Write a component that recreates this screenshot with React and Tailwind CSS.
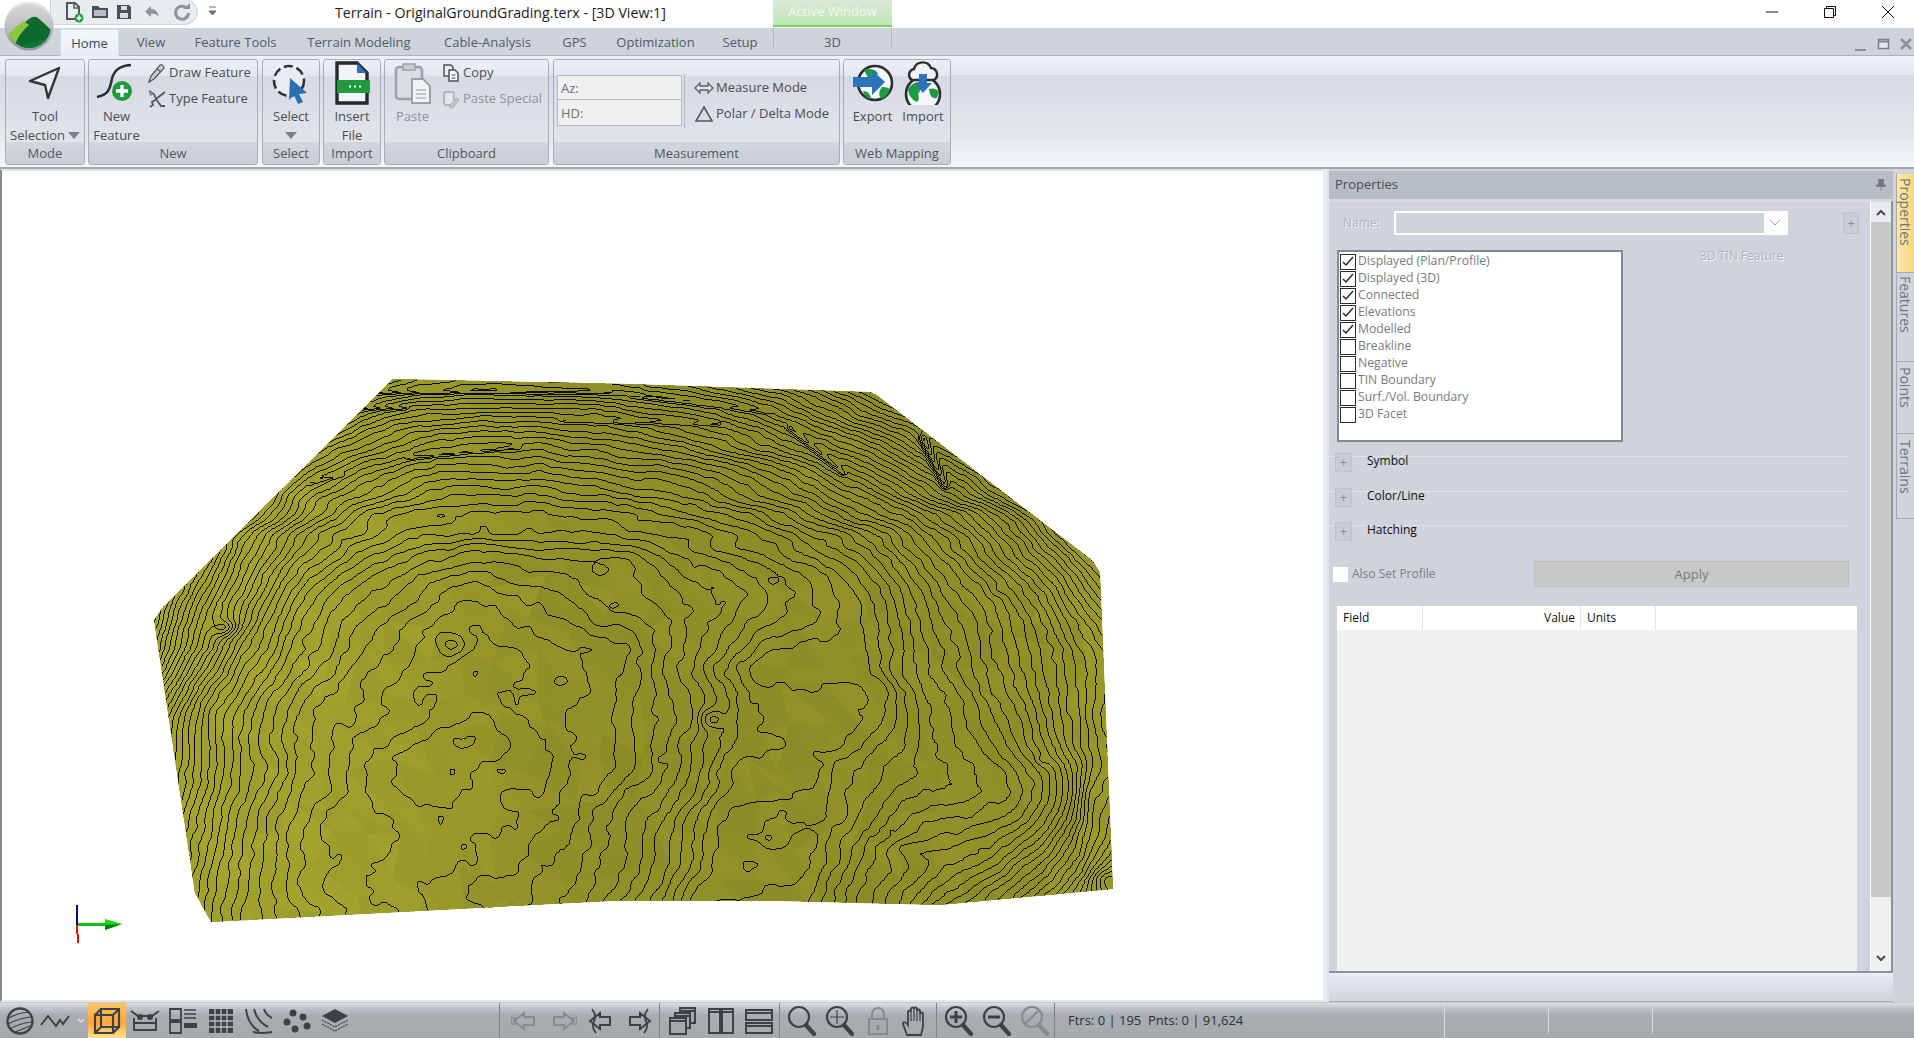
import React, { useMemo } from "react";

const outline = [
  [393, 379], [630, 384], [870, 392], [878, 396], [1093, 561], [1100, 573],
  [1113, 889], [940, 905], [781, 901], [610, 901], [211, 922], [195, 893],
  [154, 620], [163, 607],
];

const bumps = [
  [225, 628, 3, 11, 8], [452, 645, 2.2, 13, 11], [710, 719, 2.4, 12, 9], [1030, 810, -7, 85, 62],
  [1105, 880, 3, 16, 12], [1090, 800, 2, 14, 30], [470, 735, -0.8, 40, 22], [350, 720, 0.9, 10, 10],
  [770, 580, 0.9, 9, 7], [600, 570, 0.8, 7, 5], [1000, 590, 0.8, 8, 6], [905, 850, 1.4, 30, 12],
  [880, 690, -1.2, 16, 16], [510, 800, 1, 9, 7], [330, 690, 0.8, 7, 5], [560, 680, 0.8, 8, 6],
  [430, 700, 0.8, 6, 6], [500, 770, 0.8, 8, 5], [300, 650, 0.7, 5, 4], [660, 760, 0.8, 6, 5],
  [960, 740, 0.8, 6, 6], [1040, 760, 0.8, 7, 5], [640, 660, 0.8, 6, 5], [890, 830, 0.7, 5, 4],
];

const ridges = [
  [373, 392, 610, 392, 1.5, 1.6], [350, 408, 407, 408, 1.5, 1.6], [407, 458, 520, 447, 1.6, 1.6],
  [310, 483, 343, 475, 1.2, 1.6], [630, 396, 770, 412, 1.2, 1.6], [790, 428, 843, 473, 2, 3],
  [923, 439, 945, 485, 3.5, 4], [560, 420, 720, 424, 1.2, 1.6],
];

const rand = (x, y) => {
  const s = Math.sin(x * 127.1 + y * 311.7) * 43758.5453;
  return s - Math.floor(s);
};

const vnoise = (x, y) => {
  const ix = Math.floor(x);
  const iy = Math.floor(y);
  const fx = x - ix;
  const fy = y - iy;
  const u = fx * fx * (3 - 2 * fx);
  const v = fy * fy * (3 - 2 * fy);
  const a = rand(ix, iy);
  const b = rand(ix + 1, iy);
  const c = rand(ix, iy + 1);
  const d = rand(ix + 1, iy + 1);
  return (a + (b - a) * u + (c - a) * v + (a - b - c + d) * u * v) * 2 - 1;
};

const smooth = (a, b, x) => {
  const t = Math.min(1, Math.max(0, (x - a) / (b - a)));
  return t * t * (3 - 2 * t);
};

const stretch = new Float32Array(1100);
for (let i = 1; i < 1100; i++) {
  const x = i + 480;
  const s = 1.3 - 1.25 * smooth(740, 785, x) + 0.6 * smooth(845, 880, x);
  stretch[i] = stretch[i - 1] + s;
}

const height = (x, y) => {
  const dx = x + Math.max(0, y - 650) * 0.25 - 480;
  const flat = smooth(560, 680, y);
  const warped = dx > 0 ? stretch[Math.min(1099, Math.floor(dx))] : dx;
  const rightX = warped * flat + dx * 0.85 * (1 - flat);
  const X = dx < 0 ? dx / 290 : rightX / 450;
  const Y = (y - 740) / (y < 740 ? 310 : 560);
  const d = Math.hypot(X, Y);
  let h = 6 * d + 16 * d * d * d;
  const topness = smooth(620, 460, y);
  h += vnoise(x / 78, y / (55 - 25 * topness)) * 1.0;
  h += vnoise(x / 30 + 9, y / (24 - 10 * topness) + 4) * 0.4;
  h += vnoise(x / 11 + 3, y / 9 + 7) * 0.22;
  for (const [bx, by, amp, sx, sy] of bumps) {
    const a = (x - bx) / sx;
    const b = (y - by) / sy;
    h += amp * Math.exp(-(a * a + b * b));
  }
  for (const [x1, y1, x2, y2, amp, w] of ridges) {
    const vx = x2 - x1;
    const vy = y2 - y1;
    const t = Math.min(1, Math.max(0, ((x - x1) * vx + (y - y1) * vy) / (vx * vx + vy * vy)));
    const dist = Math.hypot(x - x1 - vx * t, y - y1 - vy * t);
    h += amp * Math.exp(-(dist * dist) / (w * w));
  }
  return h;
};

const inside = (x, y) => {
  let hit = false;
  for (let i = 0, j = outline.length - 1; i < outline.length; j = i++) {
    const [xi, yi] = outline[i];
    const [xj, yj] = outline[j];
    if (yi > y !== yj > y && x < ((xj - xi) * (y - yi)) / (yj - yi) + xi) hit = !hit;
  }
  return hit;
};

const buildContours = () => {
  const step = 2;
  const x0 = 150;
  const y0 = 374;
  const cols = 486;
  const rows = 278;
  const grid = new Float32Array((cols + 1) * (rows + 1));
  for (let r = 0; r <= rows; r++) {
    for (let c = 0; c <= cols; c++) {
      grid[r * (cols + 1) + c] = height(x0 + c * step, y0 + r * step);
    }
  }
  const out = [];
  for (let r = 0; r < rows; r++) {
    for (let c = 0; c < cols; c++) {
      const x = x0 + c * step;
      const y = y0 + r * step;
      if (!inside(x + 1, y + 1)) continue;
      const a = grid[r * (cols + 1) + c];
      const b = grid[r * (cols + 1) + c + 1];
      const e = grid[(r + 1) * (cols + 1) + c + 1];
      const f = grid[(r + 1) * (cols + 1) + c];
      const lo = Math.ceil(Math.min(a, b, e, f));
      const hi = Math.floor(Math.max(a, b, e, f));
      for (let l = lo; l <= hi; l++) {
        const pts = [];
        if (a < l !== b < l) pts.push([x + (step * (l - a)) / (b - a), y]);
        if (b < l !== e < l) pts.push([x + step, y + (step * (l - b)) / (e - b)]);
        if (f < l !== e < l) pts.push([x + (step * (l - f)) / (e - f), y + step]);
        if (a < l !== f < l) pts.push([x, y + (step * (l - a)) / (f - a)]);
        for (let i = 0; i + 1 < pts.length; i += 2) {
          out.push(
            `M${Math.round(pts[i][0])} ${Math.round(pts[i][1])}L${Math.round(pts[i + 1][0])} ${Math.round(pts[i + 1][1])}`
          );
        }
      }
    }
  }
  return out.join("");
};

const buildFacets = () => {
  const size = 36;
  const cols = 28;
  const rows = 16;
  const pt = (c, r) => [
    140 + c * size + (rand(c, r) - 0.5) * 26,
    370 + r * size + (rand(r + 40, c) - 0.5) * 26,
  ];
  const shade = (x, y, k) => {
    const left = 1 - smooth(240, 620, x);
    const right = smooth(1000, 1100, x);
    const top = smooth(620, 440, y) * (1 - left);
    const v = 143 + left * 18 + right * 10 - top * 2 + (rand(x, y + k) - 0.5) * 7;
    const g = Math.round(v);
    return `rgb(${g},${g},${Math.round(v * 0.28)})`;
  };
  const list = [];
  for (let r = 0; r < rows; r++) {
    for (let c = 0; c < cols; c++) {
      const p = [pt(c, r), pt(c + 1, r), pt(c + 1, r + 1), pt(c, r + 1)];
      [[p[0], p[1], p[2]], [p[0], p[2], p[3]]].forEach((tri, k) => {
        const fill = shade(tri[0][0], tri[1][1], k);
        list.push({ d: tri.map((q) => q[0].toFixed(0) + "," + q[1].toFixed(0)).join(" "), fill });
      });
    }
  }
  return list;
};

const TerrainView = () => {
  const contours = useMemo(buildContours, []);
  const facets = useMemo(buildFacets, []);
  const points = outline.map((p) => p.join(",")).join(" ");
  return (
    <svg width="1321" height="829" viewBox="2 171 1321 829" className="block">
      <defs>
        <clipPath id="terrain-clip">
          <polygon points={points} />
        </clipPath>
      </defs>
      <polygon points={points} fill="#98982a" shapeRendering="crispEdges" />
      <g clipPath="url(#terrain-clip)">
        {facets.map((f, i) => (
          <polygon key={i} points={f.d} fill={f.fill} stroke={f.fill} strokeWidth="1" />
        ))}
        <path d={contours} fill="none" stroke="#0b0b04" strokeWidth="1" shapeRendering="crispEdges" />
      </g>
      <rect x="76" y="905" width="2" height="20" fill="#0a0a6e" />
      <rect x="76" y="925" width="2" height="9" fill="#e01010" />
      <rect x="77" y="934" width="2" height="9" fill="#e01010" />
      <rect x="78" y="923" width="28" height="3" fill="#12c012" />
      <polygon points="105,919 122,924 105,930" fill="#00e000" />
      <polygon points="105,925 122,924 105,930" fill="#067a06" />
    </svg>
  );
};

const Logo = () => (
  <svg width="50" height="50" viewBox="0 0 50 50">
    <defs>
      <linearGradient id="logo-ring" x1="0" y1="0" x2="0" y2="1">
        <stop offset="0" stopColor="#e6e8ec" />
        <stop offset="1" stopColor="#8f949c" />
      </linearGradient>
      <linearGradient id="logo-sky" x1="0" y1="0" x2="0" y2="1">
        <stop offset="0" stopColor="#d8dada" />
        <stop offset="1" stopColor="#a3a8a5" />
      </linearGradient>
      <clipPath id="logo-clip">
        <circle cx="25" cy="25" r="22" />
      </clipPath>
    </defs>
    <circle cx="25" cy="25" r="24.5" fill="url(#logo-ring)" />
    <g clipPath="url(#logo-clip)">
      <rect width="50" height="50" fill="url(#logo-sky)" />
      <path d="M2 40 Q14 26 25 18 Q30 14 34 17 Q40 22 48 30 L48 50 L0 50 Z" fill="#0d6a2b" />
      <path d="M2 36 Q10 26 20 20 L25 24 Q15 32 10 46 Z" fill="#8cc63f" />
      <path d="M12 48 Q26 40 48 38 L48 50 L12 50 Z" fill="#0b7b34" />
    </g>
  </svg>
);

const NewDocIcon = () => (
  <svg width="22" height="22" viewBox="0 0 22 22">
    <path d="M4 2h8l4 4v12H4z" fill="#e9edf2" stroke="#555" strokeWidth="2" />
    <path d="M11 2v5h5" fill="none" stroke="#555" strokeWidth="1.5" />
    <circle cx="16" cy="17" r="4.5" fill="#2a9d3f" />
    <path d="M16 14.5v5M13.5 17h5" stroke="#fff" strokeWidth="1.6" />
  </svg>
);

const FolderIcon = () => (
  <svg width="20" height="20" viewBox="0 0 20 20">
    <path d="M2 16V4h6l2 2h8v10z" fill="#4a4e55" />
    <path d="M4 8h12v6H4z" fill="#b6bdc8" />
  </svg>
);

const SaveIcon = () => (
  <svg width="18" height="18" viewBox="0 0 18 18">
    <path d="M2 2h12l2 2v12H2z" fill="#4c4f55" />
    <path d="M6 3h6v4H6z" fill="#d9dde3" />
    <path d="M5 10h8v5H5z" fill="#d9dde3" />
  </svg>
);

const UndoIcon = () => (
  <svg width="20" height="18" viewBox="0 0 20 18">
    <path d="M8 3L2 8.5 8 14v-3.5c4 0 6 1 8 3.500-1-5-3.500-8-8-8z" fill="#8e939b" />
  </svg>
);

const RedoIcon = () => (
  <svg width="20" height="20" viewBox="0 0 20 20">
    <path d="M14.500 6A6.500 6.500 0 1 0 16.500 11" fill="none" stroke="#8e939b" strokeWidth="3" />
    <path d="M11 7h7V1z" fill="#8e939b" />
  </svg>
);

const ToolIcon = () => (
  <svg width="36" height="38" viewBox="0 0 36 38">
    <path d="M3 17L32 4 21 34 18 21z" fill="#e9ebf0" stroke="#33363a" strokeWidth="2.4" strokeLinejoin="round" />
  </svg>
);

const NewFeatureIcon = () => (
  <svg width="42" height="44" viewBox="0 0 42 44">
    <path d="M1 36C10 34 13 31 15 22 17 10 22 5 35 4" fill="none" stroke="#2c2e31" strokeWidth="2.6" />
    <circle cx="26" cy="30" r="10" fill="#1f9a3f" />
    <path d="M26 24v12M20 30h12" stroke="#fff" strokeWidth="3.4" />
  </svg>
);

const PenIcon = () => (
  <svg width="18" height="20" viewBox="0 0 18 20">
    <path d="M1 19l2-6L12 2c2-1 4 1 4 3L6 16z" fill="#c9ccd1" stroke="#55585d" strokeWidth="1.3" />
    <path d="M9 6l4 3" stroke="#55585d" strokeWidth="1.2" />
  </svg>
);

const TypeIcon = () => (
  <svg width="20" height="20" viewBox="0 0 20 20">
    <path d="M2 2l5 3 2 5 9-7M10 10l-5 3 1 3-3 2M9 10l5 7 4 0" fill="none" stroke="#55585d" strokeWidth="1.8" />
    <circle cx="4" cy="5" r="1.800" fill="#8a8d92" />
  </svg>
);

const SelectIcon = () => (
  <svg width="40" height="44" viewBox="0 0 40 44">
    <circle cx="18" cy="20" r="15" fill="#e9edf3" stroke="#2f3236" strokeWidth="2.6" strokeDasharray="9 4" />
    <path d="M19 17l17 15-8 1 4 8-5 2-4-9-5 5z" fill="#2c6fb0" />
  </svg>
);

const InsertIcon = () => (
  <svg width="36" height="44" viewBox="0 0 36 44">
    <path d="M3 2h20l10 10v30H3z" fill="#f1f3f6" stroke="#26292c" strokeWidth="3.4" />
    <path d="M23 2l10 10H23z" fill="#2f6fb4" />
    <rect x="3" y="19" width="33" height="13" fill="#1f9a3f" />
    <path d="M15 25.500h2M20 25.500h2M25 25.500h2" stroke="#fff" strokeWidth="2" />
  </svg>
);

const PasteIcon = () => (
  <svg width="38" height="44" viewBox="0 0 38 44">
    <rect x="2" y="6" width="26" height="32" rx="3" fill="#d9dde3" stroke="#9ea2a8" strokeWidth="2.500" />
    <rect x="9" y="3" width="12" height="6" fill="#c9ccd1" stroke="#9ea2a8" strokeWidth="1.500" />
    <path d="M18 18h11l7 7v17H18z" fill="#f2f3f5" stroke="#9ea2a8" strokeWidth="2" />
    <path d="M22 29h10M22 33h10M22 37h10" stroke="#b3b6bb" strokeWidth="1.500" />
  </svg>
);

const CopyIcon = () => (
  <svg width="18" height="18" viewBox="0 0 18 18">
    <path d="M2 1h7l2 2v9H2z" fill="#eef0f3" stroke="#4f5257" strokeWidth="1.500" />
    <path d="M7 6h6l3 3v8H7z" fill="#f6f7f9" stroke="#4f5257" strokeWidth="1.500" />
    <path d="M9.500 11h4M9.500 14h4" stroke="#4f5257" />
  </svg>
);

const PasteSpecialIcon = () => (
  <svg width="18" height="18" viewBox="0 0 18 18">
    <rect x="2" y="2" width="10" height="13" rx="2" fill="#e3e5e9" stroke="#a5a8ad" strokeWidth="1.500" />
    <path d="M8 15l7-7 2 2-6 7-3 1z" fill="#c4c7cc" stroke="#a5a8ad" />
  </svg>
);

const MeasureIcon = () => (
  <svg width="20" height="14" viewBox="0 0 20 14">
    <path d="M1 7l5-5v3h8V2l5 5-5 5V9H6v3z" fill="#e2e5ea" stroke="#5c5f64" strokeWidth="1.300" />
  </svg>
);

const DeltaIcon = () => (
  <svg width="20" height="18" viewBox="0 0 20 18">
    <path d="M10 2l8 14H2z" fill="#d9dce2" stroke="#55585d" strokeWidth="1.600" />
  </svg>
);

const ExportIcon = () => (
  <svg width="42" height="40" viewBox="0 0 42 40">
    <circle cx="23" cy="20" r="17" fill="#f4f6f7" stroke="#2b2e30" strokeWidth="2.600" />
    <path d="M12 7q9-3 14 3-2 6-10 5zM30 24q6 0 8 2-2 8-9 10-4-6 1-12zM11 28q7 0 8 8-6-1-8-8z" fill="#1f9a3f" />
    <path d="M1 14h19V7l13 12-13 13v-8H1z" fill="#2b74bc" />
  </svg>
);

const ImportIcon = () => (
  <svg width="40" height="44" viewBox="0 0 40 44">
    <circle cx="20" cy="33" r="17" fill="#f4f6f7" stroke="#2b2e30" strokeWidth="2.600" />
    <path d="M5 28q5-7 11-7 3 8-1 12 2 5-1 8-8-3-9-13zM26 28q7-2 10 3l-2 6q-7 2-8-9z" fill="#1f9a3f" />
    <path d="M9 19a6 6 0 0 1 2-11 9 9 0 0 1 17-1 6.500 6.500 0 0 1 3 12z" fill="#eef2f5" stroke="#2b2e30" strokeWidth="2.400" />
    <path d="M16 13h8v9h5L20 32l-9-10h5z" fill="#2b74bc" />
  </svg>
);

const GrayArrow = ({ className }) => (
  <svg width="12" height="7" viewBox="0 0 12 7" className={className}>
    <path d="M0 0h12L6 7z" fill="#7d8187" />
  </svg>
);

const bar = "#3f4245";
const off = "#878a8e";

const SphereIcon = () => (
  <svg width="30" height="30" viewBox="0 0 30 30">
    <circle cx="15" cy="15" r="12.500" fill="none" stroke={bar} strokeWidth="2.400" />
    <path d="M4 12q8-5 20-6M3 18q11-6 24-7M5 23q10-6 22-7M10 26q8-3 15-6" fill="none" stroke={bar} strokeWidth="1.200" />
  </svg>
);

const WaveIcon = () => (
  <svg width="30" height="16" viewBox="0 0 30 16">
    <path d="M1 12L8 3l8 10 4-6 3 4 6-8" fill="none" stroke={bar} strokeWidth="2" />
  </svg>
);

const CubeIcon = () => (
  <svg width="28" height="28" viewBox="0 0 28 28">
    <path d="M2 8h18v18H2zM8 2h18v18H8zM2 8l6-6M20 8l6-6M2 26l6-6M20 26l6-6" fill="none" stroke={bar} strokeWidth="2.200" />
  </svg>
);

const BridgeIcon = () => (
  <svg width="30" height="26" viewBox="0 0 30 26">
    <path d="M1 3l7 5h14l7-5M4 10v12h22V10M4 15h22" fill="none" stroke={bar} strokeWidth="2" />
    <circle cx="10" cy="9" r="3" fill={bar} />
    <circle cx="20" cy="9" r="3" fill={bar} />
  </svg>
);

const PanelsIcon = () => (
  <svg width="28" height="26" viewBox="0 0 28 26">
    <path d="M1 1h11v11H1zM1 14h11v11H1z" fill="none" stroke={bar} strokeWidth="1.800" />
    <path d="M15 2h12M15 6h12M15 10h12" stroke={bar} strokeWidth="1.600" />
    <rect x="15" y="15" width="13" height="5" fill={bar} />
  </svg>
);

const TableIcon = () => (
  <svg width="26" height="26" viewBox="0 0 26 26">
    <rect x="1" y="1" width="24" height="24" fill={bar} />
    <path d="M7 1v24M13 1v24M19 1v24M1 7h24M1 13h24M1 19h24" stroke="#b8bbbf" strokeWidth="1.300" />
  </svg>
);

const ContoursIcon = () => (
  <svg width="28" height="26" viewBox="0 0 28 26">
    <path d="M1 1q2 16 13 22M9 1q3 12 14 18M19 1q2 6 8 9M8 24q8 2 19 0" fill="none" stroke={bar} strokeWidth="2" />
  </svg>
);

const DotsIcon = () => (
  <svg width="28" height="24" viewBox="0 0 28 24">
    <circle cx="10" cy="4" r="3.500" fill={bar} />
    <circle cx="20" cy="8" r="3.500" fill={bar} />
    <circle cx="4" cy="13" r="3.500" fill={bar} />
    <circle cx="24" cy="17" r="3.500" fill={bar} />
    <circle cx="12" cy="20" r="3.500" fill={bar} />
  </svg>
);

const LayersIcon = () => (
  <svg width="28" height="26" viewBox="0 0 28 26">
    <path d="M14 1l13 7-13 7L1 8z" fill={bar} />
    <path d="M1 12l13 7 13-7M1 16l13 7 13-7" fill="none" stroke={bar} strokeWidth="1.200" strokeDasharray="2 1" />
  </svg>
);

const NavIcon = ({ flip, bars }) => (
  <svg width="28" height="26" viewBox="0 0 28 26" style={flip ? { transform: "scaleX(-1)" } : undefined}>
    <path d="M3 13l10-8v4h10v8H13v4z" fill="none" stroke={bars ? bar : off} strokeWidth="2" />
    {bars ? (
      <path d="M5 1q5 6 2 12t2 12" fill="none" stroke={bar} strokeWidth="1.800" />
    ) : (
      <rect x="0" y="10" width="4" height="6" fill="none" stroke={off} strokeWidth="1.600" />
    )}
  </svg>
);

const WindowsIcon = ({ kind }) => (
  <svg width="30" height="30" viewBox="0 0 30 30">
    {kind === "stack" && (
      <g fill="#a5a8ad" stroke={bar} strokeWidth="2">
        <rect x="12" y="2" width="15" height="15" />
        <rect x="7" y="7" width="15" height="15" />
        <rect x="2" y="12" width="16" height="16" />
        <path d="M2 15h16M7 10h15M12 5h15" />
      </g>
    )}
    {kind === "cols" && <path d="M3 3h11v24H3zM16 3h11v24H16zM3 6h11M16 6h11" fill="none" stroke={bar} strokeWidth="2" />}
    {kind === "rows" && <path d="M2 4h26v10H2zM2 17h26v10H2zM2 7h26M2 20h26" fill="none" stroke={bar} strokeWidth="2" />}
  </svg>
);

const Magnifier = ({ color = bar, children }) => (
  <svg width="30" height="32" viewBox="0 0 30 32">
    <circle cx="12" cy="12" r="10" fill="none" stroke={color} strokeWidth="2.200" />
    <path d="M19 20l8 9" stroke={color} strokeWidth="4.200" strokeLinecap="round" />
    {children}
  </svg>
);

const LockIcon = () => (
  <svg width="24" height="30" viewBox="0 0 24 30">
    <path d="M6 13V8a6 6 0 0 1 12 0v5" fill="none" stroke={off} strokeWidth="2" />
    <rect x="3" y="13" width="18" height="15" fill="none" stroke={off} strokeWidth="2" />
    <path d="M12 19v5" stroke={off} strokeWidth="3" />
  </svg>
);

const HandIcon = () => (
  <svg width="28" height="32" viewBox="0 0 28 32">
    <path
      d="M5 30L1 19c0-3 3-2 5 1V7c0-2 3-2 3 0V4c0-2 3-2 3 0v0c0-2 3-2 3 0v2c0-2 3-2 3 0v3c0-2 3-2 3 0v13l-2 8z"
      fill="none"
      stroke={bar}
      strokeWidth="1.800"
    />
    <path d="M9 7v9M12 4v12M15 5v11M18 8v8" stroke={bar} strokeWidth="1.200" />
  </svg>
);

const StatusSlot = ({ children, className = "w-[38px]" }) => (
  <div className={`${className} h-full flex items-center justify-center shrink-0`}>{children}</div>
);

const Group = ({ label, className, children }) => (
  <div className={`${className} flex flex-col rounded-[3px] border border-[#a9adb5] bg-[linear-gradient(#edf0f6,#e4e7ef_15%,#d6dae5_16%,#e4e7ea_100%)]`}>
    <div className="flex-1 flex min-h-0">{children}</div>
    <div className="h-[22px] shrink-0 flex items-center justify-center pt-[2px] rounded-b-[3px] bg-[linear-gradient(#d2d6df,#c9cdd6)] text-[13px] text-[#55585e]">
      {label}
    </div>
  </div>
);

const BigButton = ({ icon, lines, className = "", disabled }) => (
  <div className={`${className} flex flex-col items-center pt-[2px] text-[13px] leading-[19px] ${disabled ? "text-[#8f9298]" : "text-[#4a4d52]"}`}>
    <div className="h-[45px] shrink-0 pb-[3px] flex items-center justify-center">{icon}</div>
    {lines}
  </div>
);

const SmallButton = ({ icon, text, disabled }) => (
  <div className={`flex items-center h-[26px] text-[13px] ${disabled ? "text-[#8f9298]" : "text-[#4a4d52]"}`}>
    <div className="w-[22px] flex justify-center shrink-0">{icon}</div>
    <span className="ml-[1px]">{text}</span>
  </div>
);

const checks = [
  ["Displayed (Plan/Profile)", true],
  ["Displayed (3D)", true],
  ["Connected", true],
  ["Elevations", true],
  ["Modelled", true],
  ["Breakline", false],
  ["Negative", false],
  ["TIN Boundary", false],
  ["Surf./Vol. Boundary", false],
  ["3D Facet", false],
];

const Section = ({ label, className }) => (
  <div className={`${className} mr-[20px] border-t border-[#dfe2e8] flex`}>
    <div className="ml-[6px] -mt-[4px] w-[17px] h-[19px] bg-[#c9ccd2] border border-[#bfc2c8] flex items-center justify-center text-[13px] leading-none text-[#8a8d92]">
      +
    </div>
    <div className="ml-[15px] -mt-[5px] text-[12px] leading-[17px] text-[#111]">{label}</div>
  </div>
);

const tabs = [
  ["View", "w-[64px]"],
  ["Feature Tools", "w-[105px]"],
  ["Terrain Modeling", "w-[142px]"],
  ["Cable-Analysis", "w-[115px]"],
  ["GPS", "w-[59px]"],
  ["Optimization", "w-[103px]"],
  ["Setup", "w-[66px]"],
];

const App = () => {
  return (
    <div className="w-[1914px] h-[1038px] overflow-hidden relative flex flex-col bg-[#d0d4dd] font-['Open_Sans','Liberation_Sans',sans-serif] text-[13px]">
      <div className="absolute left-[4px] top-[1px] z-10">
        <Logo />
      </div>

      {/* title bar */}
      <div className="h-[28px] shrink-0 bg-white flex">
        <div className="w-[335px] shrink-0 pl-[50px] flex items-start">
          <div className="h-[26px] w-[148px] -mt-px rounded-r-[14px] border border-[#cfd3da] bg-[#e8ebf0] pl-[12px] flex items-center gap-[5px]">
            <NewDocIcon />
            <FolderIcon />
            <SaveIcon />
            <div className="ml-[5px]">
              <UndoIcon />
            </div>
            <div className="ml-[4px]">
              <RedoIcon />
            </div>
          </div>
          <svg width="10" height="12" viewBox="0 0 10 12" className="ml-[10px] mt-[6px]">
            <path d="M1 1h7M1 5h7L4.500 9z" stroke="#6a6d72" fill="#6a6d72" strokeWidth="1" />
          </svg>
        </div>
        <div className="w-[438px] shrink-0 text-[14.2px] leading-[26px] text-[#1c1c1c] whitespace-nowrap">
          Terrain - OriginalGroundGrading.terx - [3D View:1]
        </div>
        <div className="w-[119px] shrink-0 h-[27px] border-b-2 border-[#7dcf60] bg-[linear-gradient(#dbe9d8,#bfe8b4)] text-center text-[13px] leading-[23px] text-[#f3f8f1]">
          Active Window
        </div>
        <div className="ml-auto flex items-center gap-[46px] pr-[20px] pb-[4px]">
          <svg width="12" height="12" viewBox="0 0 12 12">
            <path d="M0 6h12" stroke="#111" strokeWidth="1" />
          </svg>
          <svg width="12" height="12" viewBox="0 0 12 12">
            <path d="M.5 2.500h9v9h-9zM2.500 2.500v-2h9v9h-2" fill="none" stroke="#111" strokeWidth="1" />
          </svg>
          <svg width="12" height="12" viewBox="0 0 12 12">
            <path d="M0 0l12 12M12 0L0 12" stroke="#111" strokeWidth="1" />
          </svg>
        </div>
      </div>

      {/* tabs */}
      <div className="h-[28px] shrink-0 bg-[#ced3dc] border-b border-[#aeb2b9] flex text-[13px] text-[#4f5c6b]">
        <div className="ml-[60px] w-[59px] h-[27px] mt-px rounded-t-[2px] border border-b-0 border-[#c9e6ea] bg-[linear-gradient(#f5f8fb,#e9ecf3)] text-center leading-[26px] text-[#3c4a58]">
          Home
        </div>
        {tabs.map(([name, width]) => (
          <div key={name} className={`${width} shrink-0 text-center leading-[28px]`}>
            {name}
          </div>
        ))}
        <div className="w-[119px] h-[19px] shrink-0 border-x border-[#b4b9c1] text-center leading-[28px]">3D</div>
        <div className="ml-auto flex items-start pr-[1px] gap-[9px] pt-[9px]">
          <svg width="14" height="14" viewBox="0 0 14 14" className="mt-[1px]">
            <path d="M1 12h11" stroke="#8d9298" strokeWidth="2" />
          </svg>
          <svg width="14" height="14" viewBox="0 0 14 14">
            <path d="M1.500 2.500h10v9h-10z" fill="#e6e8ec" stroke="#7b8087" strokeWidth="1.500" />
            <path d="M1 4.500h11" stroke="#7b8087" strokeWidth="2" />
          </svg>
          <svg width="13" height="14" viewBox="0 0 13 14">
            <path d="M1 2l10 10M11 2L1 12" stroke="#8d9298" strokeWidth="2.600" />
          </svg>
        </div>
      </div>

      {/* ribbon */}
      <div className="h-[113px] shrink-0 border-b-2 border-[#a3a7ad] bg-[linear-gradient(#eef1f7,#e4e7f0_17%,#d5dae5_17.5%,#e4e7ea_70%,#f1f8f9)] flex pl-[5px] pt-[3px] pb-[2px] gap-[3px]">
        <Group label="Mode" className="w-[80px]">
          <BigButton
            className="w-full"
            icon={<ToolIcon />}
            lines={
              <>
                <span>Tool</span>
                <span className="flex items-center whitespace-nowrap">
                  Selection
                  <GrayArrow className="ml-[3px]" />
                </span>
              </>
            }
          />
        </Group>
        <Group label="New" className="w-[170px]">
          <BigButton
            className="w-[57px] -ml-px"
            icon={<NewFeatureIcon />}
            lines={
              <>
                <span>New</span>
                <span>Feature</span>
              </>
            }
          />
          <div className="ml-px">
            <SmallButton icon={<PenIcon />} text="Draw Feature" />
            <SmallButton icon={<TypeIcon />} text="Type Feature" />
          </div>
        </Group>
        <Group label="Select" className="w-[58px] ml-px">
          <BigButton
            className="w-full"
            icon={<SelectIcon />}
            lines={
              <>
                <span>Select</span>
                <GrayArrow className="mt-[6px]" />
              </>
            }
          />
        </Group>
        <Group label="Import" className="w-[58px]">
          <BigButton
            className="w-full"
            icon={<InsertIcon />}
            lines={
              <>
                <span>Insert</span>
                <span>File</span>
              </>
            }
          />
        </Group>
        <Group label="Clipboard" className="w-[165px]">
          <BigButton className="w-[55px]" disabled icon={<PasteIcon />} lines={<span>Paste</span>} />
          <div>
            <SmallButton icon={<CopyIcon />} text="Copy" />
            <SmallButton disabled icon={<PasteSpecialIcon />} text="Paste Special" />
          </div>
        </Group>
        <Group label="Measurement" className="w-[287px] ml-px">
          <div className="flex pt-[15px] pl-[3px]">
            <div className="w-[125px]">
              <div className="h-[25px] border border-[#b4bbc7] bg-[#f0f0f0] pl-[3px] leading-[24px] text-[#6d7074]">Az:</div>
              <div className="h-[26px] border border-t-0 border-[#b4bbc7] bg-[#f0f0f0] pl-[3px] leading-[26px] text-[#6d7074]">HD:</div>
            </div>
            <div className="ml-[2px] w-px h-[54px] -mt-px bg-[#b4b9c1]" />
            <div className="ml-[8px]">
              <SmallButton icon={<MeasureIcon />} text="Measure Mode" />
              <SmallButton icon={<DeltaIcon />} text="Polar / Delta Mode" />
            </div>
          </div>
        </Group>
        <Group label="Web Mapping" className="w-[108px]">
          <BigButton className="w-[54px] pl-[3px]" icon={<ExportIcon />} lines={<span>Export</span>} />
          <BigButton className="w-[50px]" icon={<ImportIcon />} lines={<span>Import</span>} />
        </Group>
      </div>

      {/* main */}
      <div className="flex-1 min-h-0 flex">
        <div className="w-[1323px] shrink-0 bg-white border-l-2 border-t-2 border-b-2 border-l-[#85888d] border-t-[#dfe1e4] border-b-[#e4e6ea]">
          <TerrainView />
        </div>
        <div className="w-[4px] shrink-0 bg-[#e8ebf2]" />

        <div className="w-[566px] shrink-0 pt-[2px] flex flex-col border-l-2 border-[#dfe3ea]">
          <div className="h-[29px] shrink-0 bg-[#b8bec8] border-b border-[#d8dbe2] flex items-center justify-between pl-[6px] pr-[7px] text-[13px] text-[#4b4d50]">
            Properties
            <svg width="10" height="12" viewBox="0 0 10 12">
              <path d="M2.500 0h5v6h2v1.500H.5V6h2zM5 7.500V12" fill="#74777c" stroke="#74777c" strokeWidth=".7" />
            </svg>
          </div>
          <div className="h-[773px] shrink-0 border-r-2 border-b-2 border-[#8f9399] border-t-2 border-t-[#d8dbe2] flex bg-[#ced3dc]">
            <div className="w-[541px] shrink-0 flex flex-col">
              <div className="flex h-[24px] mt-[9px] items-center">
                <div className="ml-[14px] w-[51px] text-[12px] text-[#aeb2b9] [text-shadow:1px_1px_0_#f3f4f6]">Name:</div>
                <div className="w-[394px] h-[24px] border-2 border-white flex bg-[#ced3dc]">
                  <div className="flex-1" />
                  <div className="w-[22px] bg-white flex items-center justify-center">
                    <svg width="10" height="6" viewBox="0 0 10 6">
                      <path d="M0 0l5 5 5-5" fill="none" stroke="#9ba0a7" />
                    </svg>
                  </div>
                </div>
                <div className="ml-[55px] w-[16px] h-[22px] bg-[#c9ccd2] border border-[#bfc2c8] flex items-center justify-center text-[#8a8d92] leading-none">
                  +
                </div>
              </div>

              <div className="flex mt-[15px] items-start">
                <div className="ml-[8px] w-[286px] h-[192px] shrink-0 bg-white border-2 border-[#848a92] pl-[1px] pt-[1px]">
                  {checks.map(([label, on]) => (
                    <div key={label} className="h-[17px] flex items-center text-[12.2px] text-[#777b80]">
                      <div className="w-[16px] h-[16px] shrink-0 border border-[#2a2a2a] flex items-center justify-center">
                        {on && (
                          <svg width="12" height="11" viewBox="0 0 12 11">
                            <path d="M1 6l3 3 7-8" fill="none" stroke="#222" strokeWidth="1.400" />
                          </svg>
                        )}
                      </div>
                      <span className="ml-[2px] whitespace-nowrap">{label}</span>
                    </div>
                  ))}
                </div>
                <div className="ml-[77px] mt-[-3px] text-[12px] leading-[17px] text-[#aeb2b9] [text-shadow:1px_1px_0_#f3f4f6] whitespace-nowrap">
                  3D TIN Feature
                </div>
              </div>

              <Section label="Symbol" className="mt-[14px] h-[35px]" />
              <Section label="Color/Line" className="h-[34px]" />
              <Section label="Hatching" className="h-[36px]" />

              <div className="flex items-center h-[26px] shrink-0">
                <div className="ml-[4px] w-[15px] h-[15px] bg-white" />
                <span className="ml-[4px] text-[12px] text-[#7b7f84]">Also Set Profile</span>
                <div className="ml-auto mr-[21px] w-[315px] h-[26px] bg-[#c8c8c8] border border-[#bcbcbc] text-center leading-[24px] text-[13px] text-[#7a7a7a]">
                  Apply
                </div>
              </div>

              <div className="mt-[19px] ml-[8px] w-[520px] flex-1 min-h-0 flex flex-col bg-[#f0f0f0]">
                <div className="h-[24px] shrink-0 bg-white flex text-[12px] leading-[24px] text-[#111]">
                  <div className="w-[86px] pl-[6px] border-r border-[#e6e7ea]">Field</div>
                  <div className="w-[158px] pr-[5px] text-right border-r border-[#e6e7ea]">Value</div>
                  <div className="w-[75px] pl-[6px] border-r border-[#e6e7ea]">Units</div>
                </div>
              </div>
            </div>

            <div className="w-[21px] shrink-0 border-l border-white bg-[#f0f0f0] flex flex-col">
              <div className="h-[20px] shrink-0 flex items-center justify-center bg-[#e9ebef]">
                <svg width="10" height="7" viewBox="0 0 10 7">
                  <path d="M1 6l4-4 4 4" fill="none" stroke="#4a4a4a" strokeWidth="2" />
                </svg>
              </div>
              <div className="h-[675px] shrink-0 bg-[#c8c8c8]" />
              <div className="flex-1 flex items-end justify-center pb-[9px]">
                <svg width="10" height="7" viewBox="0 0 10 7">
                  <path d="M1 1l4 4 4-4" fill="none" stroke="#4a4a4a" strokeWidth="2" />
                </svg>
              </div>
            </div>
          </div>
          <div className="flex-1 bg-[linear-gradient(#e9edf6,#d0d3dc)] border-b border-[#a9acb2]" />
        </div>

        {/* side tabs */}
        <div className="flex-1 pl-[3px] pt-[5px] min-w-0">
          <div className="flex flex-col border-l border-b border-[#a4a9b1] text-[14px] leading-[18px] text-[#70747a] whitespace-nowrap">
            <div className="h-[98px] bg-[linear-gradient(90deg,#fde9a8,#f7d67e)] pt-[4px] [writing-mode:vertical-rl]">Properties</div>
            <div className="h-[89px] border-t border-[#a4a9b1] pt-[3px] [writing-mode:vertical-rl]">Features</div>
            <div className="h-[72px] border-t border-[#a4a9b1] pt-[5px] [writing-mode:vertical-rl]">Points</div>
            <div className="h-[85px] border-t border-[#a4a9b1] pt-[6px] [writing-mode:vertical-rl]">Terrains</div>
          </div>
        </div>
      </div>

      {/* status bar */}
      <div className="h-[36px] shrink-0 flex text-[13px] text-[#2e3033] bg-[linear-gradient(#dcdfe4,#c2c5cb_14%,#a9acb2_35%,#a5a8ac)] border-t border-[#c6c8cc]">
        <div className="w-[500px] shrink-0 flex items-center pl-[3px] border-r border-[#7f8286]">
          <StatusSlot className="w-[34px]">
            <SphereIcon />
          </StatusSlot>
          <StatusSlot className="w-[36px]">
            <WaveIcon />
          </StatusSlot>
          <StatusSlot className="w-[15px]">
            <svg width="8" height="5" viewBox="0 0 8 5">
              <path d="M1 1l3 3 3-3" fill="none" stroke="#dfe1e4" strokeWidth="1.300" />
            </svg>
          </StatusSlot>
          <StatusSlot className="w-[38px] bg-[linear-gradient(#ffc666,#ffa63c_55%,#ffe08c)]">
            <CubeIcon />
          </StatusSlot>
          <StatusSlot>
            <BridgeIcon />
          </StatusSlot>
          <StatusSlot>
            <PanelsIcon />
          </StatusSlot>
          <StatusSlot>
            <TableIcon />
          </StatusSlot>
          <StatusSlot>
            <ContoursIcon />
          </StatusSlot>
          <StatusSlot>
            <DotsIcon />
          </StatusSlot>
          <StatusSlot>
            <LayersIcon />
          </StatusSlot>
        </div>
        <div className="w-[160px] shrink-0 flex items-center pl-[6px] border-r border-[#7f8286]">
          <StatusSlot>
            <NavIcon />
          </StatusSlot>
          <StatusSlot>
            <NavIcon flip />
          </StatusSlot>
          <StatusSlot>
            <NavIcon bars />
          </StatusSlot>
          <StatusSlot>
            <NavIcon flip bars />
          </StatusSlot>
        </div>
        <div className="w-[120px] shrink-0 flex items-center pl-[4px] border-r border-[#7f8286]">
          <StatusSlot>
            <WindowsIcon kind="stack" />
          </StatusSlot>
          <StatusSlot>
            <WindowsIcon kind="cols" />
          </StatusSlot>
          <StatusSlot>
            <WindowsIcon kind="rows" />
          </StatusSlot>
        </div>
        <div className="w-[157px] shrink-0 flex items-center pl-[3px] border-r border-[#7f8286]">
          <StatusSlot>
            <Magnifier />
          </StatusSlot>
          <StatusSlot>
            <Magnifier>
              <path d="M12 5v14M5 12h14" stroke={bar} strokeWidth="1.200" />
            </Magnifier>
          </StatusSlot>
          <StatusSlot>
            <LockIcon />
          </StatusSlot>
          <StatusSlot>
            <HandIcon />
          </StatusSlot>
        </div>
        <div className="w-[118px] shrink-0 flex items-center pl-[3px] border-r border-[#7f8286]">
          <StatusSlot>
            <Magnifier>
              <path d="M12 6v12M6 12h12" stroke={bar} strokeWidth="3" />
            </Magnifier>
          </StatusSlot>
          <StatusSlot>
            <Magnifier>
              <path d="M6 12h12" stroke={bar} strokeWidth="3" />
            </Magnifier>
          </StatusSlot>
          <StatusSlot>
            <Magnifier color={off}>
              <path d="M5 19L19 5" stroke={off} strokeWidth="2" />
            </Magnifier>
          </StatusSlot>
        </div>
        <div className="w-[390px] shrink-0 pl-[13px] flex items-center whitespace-pre border-r border-[#d8dadd]">
          Ftrs: 0 | 195  Pnts: 0 | 91,624
        </div>
        <div className="w-[104px] shrink-0 my-[5px] border-r border-[#d8dadd]" />
        <div className="w-[104px] shrink-0 my-[5px] border-r border-[#d8dadd]" />
      </div>
    </div>
  );
};

export default App;
